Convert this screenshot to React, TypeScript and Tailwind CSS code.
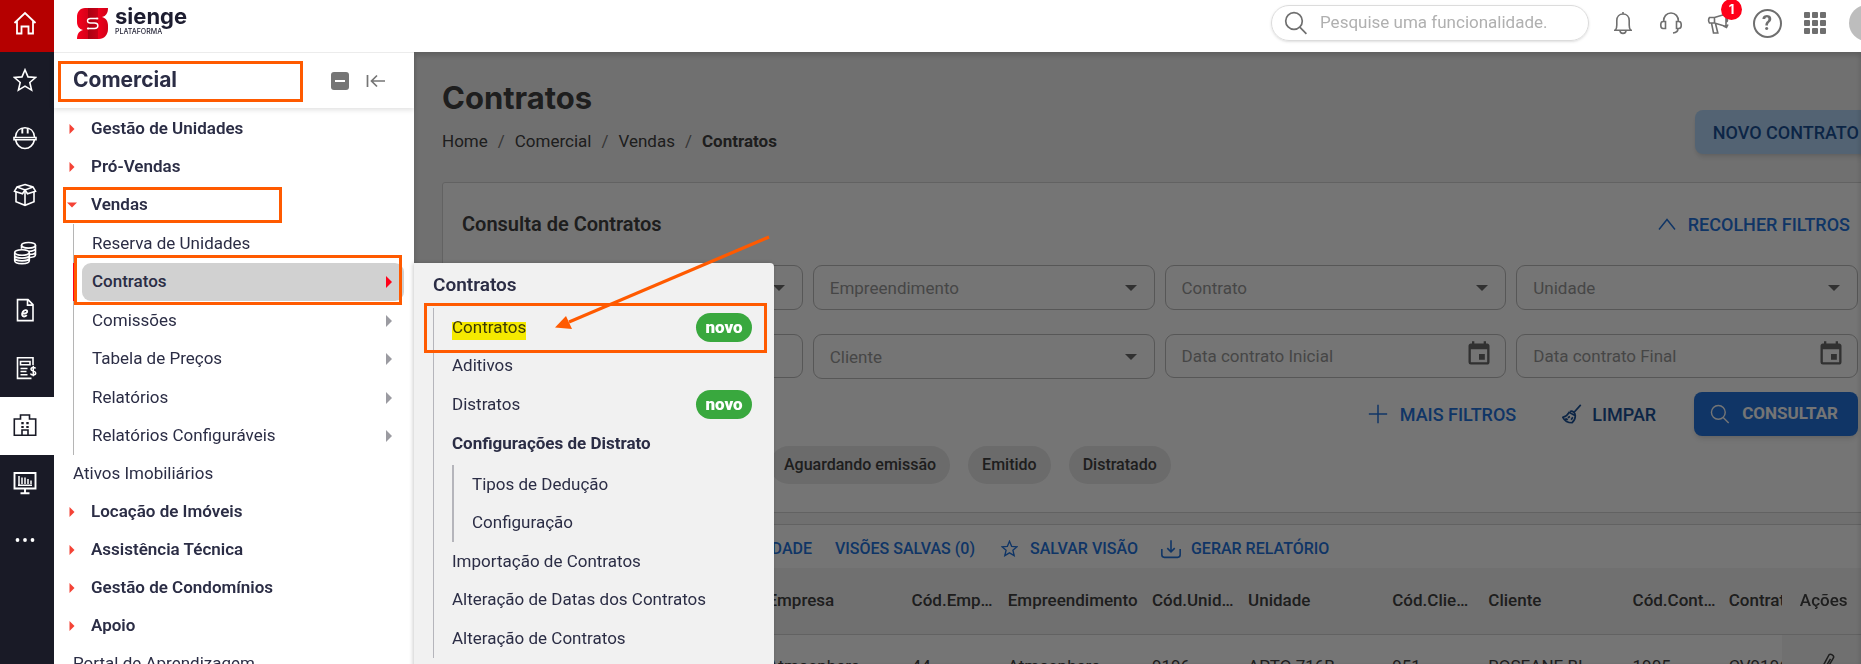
import { ReactNode } from "react";
import { MdEvent } from "react-icons/md";
import clsx from "clsx";

interface MenuEntry {
  label: string;
  open?: boolean;
  leaf?: boolean;
}

interface SubEntry {
  label: string;
  arrow?: boolean;
  active?: boolean;
}

const topMenu: MenuEntry[] = [
  { label: "Gestão de Unidades" },
  { label: "Pró-Vendas" },
  { label: "Vendas", open: true },
  { label: "Ativos Imobiliários", leaf: true },
  { label: "Locação de Imóveis" },
  { label: "Assistência Técnica" },
  { label: "Gestão de Condomínios" },
  { label: "Apoio" },
  { label: "Portal de Aprendizagem", leaf: true },
];

const vendasMenu: SubEntry[] = [
  { label: "Reserva de Unidades" },
  { label: "Contratos", arrow: true, active: true },
  { label: "Comissões", arrow: true },
  { label: "Tabela de Preços", arrow: true },
  { label: "Relatórios", arrow: true },
  { label: "Relatórios Configuráveis", arrow: true },
];

const columns = [
  { title: "Empresa", value: "Atmosphere", width: "w-[144px]" },
  { title: "Cód.Emp…", value: "44", width: "w-[96px]" },
  { title: "Empreendimento", value: "Atmosphere", width: "w-[144px]" },
  { title: "Cód.Unid…", value: "9196", width: "w-[96px]" },
  { title: "Unidade", value: "APTO 716B", width: "w-[144px]" },
  { title: "Cód.Clie…", value: "951", width: "w-[96px]" },
  { title: "Cliente", value: "ROSEANE BI…", width: "w-[144px]" },
  { title: "Cód.Cont…", value: "1905", width: "w-[96px]" },
  { title: "Contrato", value: "CV9196", width: "w-[144px]" },
];

function Icon({ children, size = "size-6", width = 1.6 }: { children: ReactNode; size?: string; width?: number }) {
  return (
    <svg viewBox="0 0 24 24" className={clsx(size, "shrink-0")} fill="none" stroke="currentColor" strokeWidth={width} aria-hidden="true">
      {children}
    </svg>
  );
}

const StarShape = () => <path d="M12 1.800l3 7.100 7.600.6-5.800 5 1.800 7.600-6.600-4-6.600 4 1.800-7.600-5.800-5 7.600-.6z" />;

const SearchShape = () => (
  <>
    <circle cx="10" cy="10" r="8.300" />
    <path d="M15.800 16.200l6.600 6.600" />
  </>
);

const railItems: { name: string; icon: ReactNode; active?: boolean }[] = [
  { name: "Favoritos", icon: <StarShape /> },
  {
    name: "Engenharia",
    icon: (
      <>
        <path d="M2.500 11C3 5 7 1.800 12 1.800S21 5 21.500 11M1 11.500h22v2.200H1zM2.600 14c1 5 4.800 8.500 9.400 8.500s8.400-3.500 9.400-8.500" />
        <path d="M9.300 2v5.500M14.700 2v5.500" strokeWidth="1.900" />
      </>
    ),
  },
  {
    name: "Suprimentos",
    icon: (
      <>
        <path d="M12 1.600l8 2.400 2.500 4.200-8 2.600L12 7 9.500 10.800 1.500 8.200 4 4z" />
        <path d="M4 4l8 3 8-3M12 7v15.300M3 9v9.800l9 3.500 9-3.500V9" />
      </>
    ),
  },
  {
    name: "Financeiro",
    icon: (
      <>
        <ellipse cx="15.500" cy="4.300" rx="7" ry="2.800" />
        <path d="M8.500 4.300v3.500M22.500 4.300v9.500c0 1.400-2.500 2.500-5.500 2.700M22.500 7.500c0 1.500-3 2.800-6.500 2.800M22.500 10.700c0 1.400-2.500 2.600-5.500 2.700" />
        <ellipse cx="9" cy="11.500" rx="7.300" ry="2.800" />
        <path d="M1.700 11.500v8.300c0 1.600 3.300 2.800 7.300 2.800s7.300-1.200 7.300-2.800v-8.300M1.700 14.400c0 1.500 3.300 2.700 7.300 2.700s7.300-1.200 7.300-2.700M1.700 17.200c0 1.500 3.300 2.700 7.300 2.700s7.300-1.200 7.300-2.700" />
      </>
    ),
  },
  {
    name: "Fiscal",
    icon: (
      <>
        <path d="M4.500 1.600h10.500l5 5v16H4.500zM14.500 1.800v5.300h5.300" />
        <path d="M9.200 15.500c3.200.2 5.200-.7 5-2.200-.2-1.800-3.300-1.500-4.400.6-1.200 2.300-.9 4.500 1.200 4.600 1.200 0 2-.5 2.800-1.300" strokeWidth="1.900" />
      </>
    ),
  },
  {
    name: "Contabilidade",
    icon: (
      <>
        <path d="M20 9V1.800H4.500v20.600h14M7.500 5.500h9.500v3.200H7.500zM7.500 12.500h7M7.500 15.500h6M7.500 18.800h7" />
        <path d="M22.500 12.500c-.5-1.300-4.500-1.600-4.500.8 0 2.300 4.700 1.300 4.700 3.700 0 2.600-4.600 2.400-5.200.6M20.300 9.800v10.400" strokeWidth="1.500" />
      </>
    ),
  },
  {
    name: "Comercial",
    active: true,
    icon: (
      <>
        <path d="M7.500 6V2h9v4h6.200v16.300H1.300V6zM9 22v-5h6v5" />
        <path d="M9.500 9v2.300M14.500 9v2.300M9.500 13v2M14.500 13v2" strokeWidth="2.400" />
      </>
    ),
  },
  {
    name: "Painéis",
    icon: (
      <>
        <path d="M1.500 2h21v15.500h-21zM12 17.500v4.300M7.500 22.300h9" strokeWidth="1.900" />
        <path d="M6 5v9.500M9 6.500v6.500M12 6.500v6.500M15 8v5M18 9.500v3.500M5 14.300h14" strokeWidth="1.500" />
      </>
    ),
  },
  {
    name: "Mais",
    icon: (
      <g fill="currentColor" stroke="none">
        <circle cx="4.500" cy="12" r="1.900" />
        <circle cx="12" cy="12" r="1.900" />
        <circle cx="19.500" cy="12" r="1.900" />
      </g>
    ),
  },
];

function Rail() {
  return (
    <nav className="flex w-[54px] shrink-0 flex-col bg-[#191a26] text-white">
      <button aria-label="Início" className="flex h-[52px] items-center justify-center bg-[#b50000] pr-1 pb-1.5">
        <Icon width={1.800}>
          <path d="M1.500 12L12 2l10.500 10M4 10v12.500h4.500v-7h7v7H20V10" />
        </Icon>
      </button>
      <ul>
        {railItems.map((item) => (
          <li key={item.name} className={clsx("h-[57px] odd:h-[58px]", item.active && "bg-white text-[#191a26]")}>
            <button aria-label={item.name} className="flex size-full items-center justify-center pr-1 pb-0.5">
              <Icon>{item.icon}</Icon>
            </button>
          </li>
        ))}
      </ul>
    </nav>
  );
}

function Logo() {
  return (
    <a href="#" className="flex items-center gap-[7px] text-[#1d1d30]">
      <svg viewBox="0 0 31 31" className="size-[31px]" aria-hidden="true">
        <defs>
          <linearGradient id="siengeRed" x1="0" x2="1" y1="0" y2="0">
            <stop offset="0" stopColor="#f5001d" />
            <stop offset=".34" stopColor="#d80018" />
            <stop offset=".35" stopColor="#a80012" />
            <stop offset=".68" stopColor="#c80016" />
            <stop offset=".69" stopColor="#ee001c" />
            <stop offset="1" stopColor="#d20018" />
          </linearGradient>
        </defs>
        <path d="M8 0h23c0 5-2 8-6 9 4 1 6 4 6 9v3c0 6-4 10-9 10H0c0-5 2-8 6-9-4-1-6-4-6-8V9c0-5 3-9 8-9z" fill="url(#siengeRed)" />
        <path d="M20 10.500h-6.500c-4 0-4 4.500 0 4.500h4c4.500 0 4.500 5.500 0 5.500H11" fill="none" stroke="#fff" strokeWidth="1.400" />
        <circle cx="20.300" cy="10.500" r="1.100" fill="#fff" />
        <circle cx="11" cy="20.500" r="1.100" fill="#fff" />
      </svg>
      <span className="flex flex-col pb-1 font-[Inter]">
        <span className="text-[22px]/[20px] font-bold">sienge</span>
        <span className="pt-0.5 text-[7px]/[8px] font-medium">PLATAFORMA</span>
      </span>
    </a>
  );
}

function TopBar() {
  return (
    <header className="relative z-30 h-[52px] shrink-0 overflow-hidden bg-white">
      <div className="-mr-6 flex h-[46px] items-center pl-[23px] text-[#6f6f6f]">
        <Logo />
        <label className="ml-auto flex h-9 w-[318px] items-center gap-3 rounded-full border border-[#dcdcdc] pr-4 pl-3 shadow-sm">
          <Icon width={1.700}>
            <SearchShape />
          </Icon>
          <input
            type="search"
            aria-label="Pesquisar"
            placeholder="Pesquise uma funcionalidade."
            className="min-w-0 flex-1 text-[17px] outline-none placeholder:text-[#b0b0b0]"
          />
        </label>
        <div className="ml-[10px] flex items-center">
          <button aria-label="Notificações" className="flex w-12 justify-center">
            <Icon>
              <path d="M3 19.300h18M4.500 19c1-1.200 1.300-2.500 1.300-5V9.500C5.800 5.500 8.500 3 12 3s6.200 2.500 6.200 6.500V14c0 2.500.3 3.800 1.300 5M12 3V1M9 19.500c0 3.800 6 3.800 6 0" />
            </Icon>
          </button>
          <button aria-label="Suporte" className="flex w-12 justify-center">
            <Icon>
              <path d="M4.500 10.500C4.500 5.500 7.500 2 12 2s7.500 3.500 7.500 8.500M6.500 10.500v7H4c-3 0-3-7 0-7zM17.500 10.500v7H20c3 0 3-7 0-7zM19 17.500c0 2.800-1.800 4.200-5 4.500" />
            </Icon>
          </button>
          <button aria-label="Novidades, 1 não lida" className="relative flex w-12 justify-center">
            <Icon>
              <path d="M2.500 6.500h5L19 3v12.500L7.500 12h-5c-1-1.500-1-4 0-5.500zM7.500 6.500V12M4.500 12l2 10h4.300L8.500 12.500M19 7.500c2 .5 2 3 0 3.500M16.500 15l3 1.500 1.500-3" />
            </Icon>
            <span className="absolute -top-3 left-[26px] flex size-[21px] items-center justify-center rounded-full bg-[#ff0019] font-[Inter] text-[13px] font-bold text-white">
              1
            </span>
          </button>
          <button aria-label="Ajuda" className="flex w-12 justify-center">
            <span className="flex size-[29px] items-center justify-center rounded-full border-2 border-[#6f6f6f] text-[20px] font-bold">?</span>
          </button>
          <button aria-label="Aplicativos" className="flex w-12 justify-center">
            <svg viewBox="0 0 22 22" className="size-[22px]" fill="currentColor" aria-hidden="true">
              {[0, 8, 16].map((y) => [0, 8, 16].map((x) => <rect key={`${x}-${y}`} x={x} y={y} width="6" height="6" rx="1" />))}
            </svg>
          </button>
          <span className="ml-[10px] size-9 rounded-full bg-[#bdbdbd]" />
        </div>
      </div>
    </header>
  );
}

function Arrow({ className }: { className?: string }) {
  return (
    <svg viewBox="0 0 6 12" className={clsx("h-3 w-1.5 shrink-0", className)} fill="currentColor" aria-hidden="true">
      <path d="M0 0l6 6-6 6z" />
    </svg>
  );
}

function Mark({ className }: { className: string }) {
  return <span className={clsx("pointer-events-none absolute z-10 border-3 border-[#ff5a00]", className)} />;
}

function SideMenu() {
  return (
    <aside className="relative z-20 w-[360px] shrink-0 bg-white text-[17px] text-[#2b2d45]">
      <div className="relative flex h-14 items-center border-t border-[#ececec] pr-7 pl-[19px] shadow-[0_2px_5px_rgba(0,0,0,0.12)]">
        <Mark className="top-2 left-1 h-[41px] w-[245px]" />
        <h2 className="pb-0.5 font-[Inter] text-[21px] font-bold">Comercial</h2>
        <button aria-label="Recolher grupos" className="ml-auto flex size-[18px] items-center justify-center rounded-[3px] bg-[#757575]">
          <span className="h-0.5 w-2.5 bg-white" />
        </button>
        <button aria-label="Fechar menu" className="ml-[17px] text-[#757575]">
          <svg viewBox="0 0 20 14" className="h-3.5 w-5" fill="none" stroke="currentColor" strokeWidth="1.700" aria-hidden="true">
            <path d="M1.500 1v12M19 7H6M11 1.500L5.500 7l5.500 5.500" />
          </svg>
        </button>
      </div>
      <ul className="pt-0.5">
        {topMenu.map((item) => (
          <li key={item.label} className="relative">
            {item.open && <Mark className="top-px left-[9px] h-9 w-[219px]" />}
            <a href="#" className={clsx("flex h-[38px] items-center", item.leaf ? "pl-[19px]" : "gap-3.5 pl-[13px] font-semibold")}>
              {!item.leaf && (
                <svg viewBox="0 0 10 10" className={clsx("size-2.5 shrink-0 text-[#f44336]", item.open && "rotate-90")} fill="currentColor" aria-hidden="true">
                  <path d="M2.500 0l5 5-5 5z" />
                </svg>
              )}
              {item.label}
            </a>
            {item.open && (
              <ul className="ml-[19px]">
                {vendasMenu.map((sub) => (
                  <li
                    key={sub.label}
                    className={clsx("relative h-[38px] border-l pl-2 odd:h-[39px]", sub.active ? "border-[#ff0019]" : "border-[#b5b5b5]")}
                  >
                    {sub.active && <Mark className="-top-2 left-0 h-[50px] w-[328px]" />}
                    <a
                      href="#"
                      className={clsx(
                        "mr-2.5 flex h-full items-center justify-between rounded-[9px] pr-3 pl-2.5",
                        sub.active && "bg-[#d1d1d1] font-medium"
                      )}
                    >
                      {sub.label}
                      {sub.arrow && <Arrow className={sub.active ? "text-[#ff0019]" : "text-[#9b9ba1]"} />}
                    </a>
                  </li>
                ))}
              </ul>
            )}
          </li>
        ))}
      </ul>
      <Flyout />
    </aside>
  );
}

function Badge() {
  return <span className="flex h-[29px] w-14 items-center justify-center rounded-full bg-[#39a83e] font-black text-white">novo</span>;
}

function Flyout() {
  const row = "flex h-[38px] items-center justify-between odd:h-[39px]";
  return (
    <div className="absolute top-[211px] left-full h-full w-[360px] rounded-tr bg-[#f1f1f1] pl-[19px] shadow-[-1px_0_4px_rgba(0,0,0,0.2)]">
      <h3 className="flex h-[45px] items-center text-[19px] font-semibold">Contratos</h3>
      <Mark className="top-10 left-[10px] h-[50px] w-[343px]" />
      <ul className="border-l border-[#b5b5bb] pr-[22px] pl-[18px]">
        <li className={row}>
          <a href="#" className="bg-linear-to-b from-transparent from-28% to-[#f5e900] to-28% text-[#3c3a08]">Contratos</a>
          <Badge />
        </li>
        <li className={row}>
          <a href="#">Aditivos</a>
        </li>
        <li className={row}>
          <a href="#">Distratos</a>
          <Badge />
        </li>
        <li>
          <span className="flex h-[41px] items-center pb-0.5 font-bold">Configurações de Distrato</span>
          <ul className="border-l-2 border-[#b5b5bb] pl-[18px]">
            <li className={row}>
              <a href="#">Tipos de Dedução</a>
            </li>
            <li className={row}>
              <a href="#">Configuração</a>
            </li>
          </ul>
        </li>
        <li className={row}>
          <a href="#">Importação de Contratos</a>
        </li>
        <li className={row}>
          <a href="#">Alteração de Datas dos Contratos</a>
        </li>
        <li className={row}>
          <a href="#">Alteração de Contratos</a>
        </li>
      </ul>
    </div>
  );
}

function SelectField({ label, hideLabel }: { label: string; hideLabel?: boolean }) {
  return (
    <div className="relative">
      <select aria-label={label} className="h-[45px] w-full appearance-none rounded-[9px] border border-[#bdbdbd] px-4 pt-0.5 text-[17px] text-[#9a9a9a]">
        <option>{hideLabel ? "" : label}</option>
      </select>
      <svg viewBox="0 0 12 6" className="pointer-events-none absolute top-5 right-[18px] h-1.5 w-3" fill="#6b6b6b" aria-hidden="true">
        <path d="M0 0h12L6 6z" />
      </svg>
    </div>
  );
}

function TextField({ label, date, hideLabel }: { label: string; date?: boolean; hideLabel?: boolean }) {
  return (
    <div className="flex h-11 items-center rounded-[9px] border border-[#bdbdbd] pr-3 pl-4">
      <input
        type="text"
        aria-label={label}
        placeholder={hideLabel ? "" : label}
        className="min-w-0 flex-1 pt-0.5 text-[17px] outline-none placeholder:text-[#9a9a9a]"
      />
      {date && (
        <button aria-label={`Abrir calendário: ${label}`}>
          <MdEvent className="mb-1 size-7 text-[#6b6b6b]" />
        </button>
      )}
    </div>
  );
}

function Filters() {
  return (
    <section className="rounded-[3px] border border-[#d6d6d6] bg-white px-[18px] pb-7">
      <div className="flex h-[82px] items-center justify-between">
        <h2 className="pl-px text-[20px] font-semibold">Consulta de Contratos</h2>
        <button className="flex items-center gap-3 pr-2 text-[18px] font-medium text-[#2475de]">
          <svg viewBox="0 0 18 12" className="h-3 w-[18px]" fill="none" stroke="currentColor" strokeWidth="1.500" aria-hidden="true">
            <path d="M1 11.500L9 1.500l8 10" />
          </svg>
          RECOLHER FILTROS
        </button>
      </div>
      <div className="grid grid-cols-4 gap-x-2.5 gap-y-6">
        <SelectField label="Empresa" hideLabel />
        <SelectField label="Empreendimento" />
        <SelectField label="Contrato" />
        <SelectField label="Unidade" />
        <TextField label="Número" hideLabel />
        <SelectField label="Cliente" />
        <TextField label="Data contrato Inicial" date />
        <TextField label="Data contrato Final" date />
      </div>
      <div className="mt-[13px] flex items-center justify-end text-[18px] font-medium">
        <button className="flex items-center gap-3 text-[#2475de]">
          <Icon size="size-5" width={1.800}>
            <path d="M12 1v22M1 12h22" />
          </Icon>
          MAIS FILTROS
        </button>
        <button className="ml-[46px] flex items-center gap-2.5 text-[#1b5298]">
          <Icon size="size-5" width={2}>
            <path d="M22.500 1L14 10.500M9.500 9c3-1.500 6.500 1.500 6.500 5M8.500 10c-2 4-4 5-7.500 6 2 4 6 6.500 11 6.500 3-2.500 4-5 4-8.500zM7 16.500l2.500-1.500M11 19l2-3M4 17.500l3 1.500" />
          </Icon>
          LIMPAR
        </button>
        <button className="ml-[38px] flex h-11 items-center gap-3 rounded-lg bg-[#2475de] pr-5 pl-4 text-[17px] font-bold text-white shadow-md">
          <Icon size="size-5" width={1.700}>
            <SearchShape />
          </Icon>
          CONSULTAR
        </button>
      </div>
      <ul className="mt-[10px] flex gap-[18px] pl-[309px] font-medium">
        {["Aguardando emissão", "Emitido", "Distratado"].map((status) => (
          <li key={status}>
            <button className="h-[38px] rounded-full bg-[#e9e9e9] px-3.5 text-[16px]">{status}</button>
          </li>
        ))}
      </ul>
    </section>
  );
}

function Results() {
  return (
    <section className="mt-[11px] rounded-t-[3px] border border-[#d6d6d6] bg-white">
      <div className="flex h-[43px] items-center pt-1 text-[16px] font-medium text-[#2475de]">
        <button className="w-[369px] text-right">DENSIDADE</button>
        <button className="ml-[23px]">VISÕES SALVAS (0)</button>
        <button className="ml-[26px] flex items-center gap-3">
          <Icon size="size-[17px]" width={1.900}>
            <StarShape />
          </Icon>
          SALVAR VISÃO
        </button>
        <button className="ml-[23px] flex items-center gap-2.5">
          <Icon size="size-5" width={1.900}>
            <path d="M12 1.500v14M7.500 11l4.500 4.500 4.500-4.500M1 12v7c0 2 .8 3 3 3h16c2.200 0 3-1 3-3v-7" />
          </Icon>
          GERAR RELATÓRIO
        </button>
      </div>
      <div className="overflow-hidden">
        <table className="w-[1524px] table-fixed text-left">
          <thead>
            <tr className="h-[66px] border-b border-[#d6d6d6] bg-[#f5f5f5]">
              <td className="w-[324px]" />
              {columns.map((column) => (
                <th key={column.title} className={clsx(column.width, "font-medium whitespace-nowrap")}>
                  {column.title}
                </th>
              ))}
              <th className="sticky right-0 w-[94px] bg-[#f5f5f5] pl-[18px] font-medium shadow-[-2px_0_4px_rgba(0,0,0,0.25)]">Ações</th>
            </tr>
          </thead>
          <tbody>
            <tr className="h-16">
              <td />
              {columns.map((column) => (
                <td key={column.title} className="whitespace-nowrap">
                  {column.value}
                </td>
              ))}
              <td className="sticky right-0 bg-[#f5f5f5] pl-9 shadow-[-2px_0_4px_rgba(0,0,0,0.25)]">
                <button aria-label="Anexos">
                  <Icon size="size-5" width={1.800}>
                    <path d="M13 2.500c2-2.500 7 .5 5.500 3.500L9.500 21c-2 2.500-6 .5-5-2.500zM15 7L8.500 18" />
                  </Icon>
                </button>
              </td>
            </tr>
          </tbody>
        </table>
      </div>
    </section>
  );
}

export default function App() {
  return (
    <div className="flex h-screen overflow-hidden font-[Roboto,sans-serif]">
      <Rail />
      <div className="flex min-w-0 flex-1 flex-col">
        <TopBar />
        <div className="relative flex min-h-0 flex-1">
          <SideMenu />
          <main className="relative min-w-0 flex-1 overflow-hidden bg-[#f5f5f5] text-[17px] text-[#424242]">
            <div className="-mr-4 pt-[23px] pl-7">
              <div className="flex items-end justify-between pb-7">
                <div>
                  <h1 className="font-[Inter] text-[31px]/[46px] font-bold">Contratos</h1>
                  <nav aria-label="Trilha" className="flex items-center gap-2.5 pt-[7px] leading-[26px]">
                    <a href="#">Home</a>
                    <span className="text-[#777]">/</span>
                    <a href="#">Comercial</a>
                    <span className="text-[#777]">/</span>
                    <a href="#">Vendas</a>
                    <span className="text-[#777]">/</span>
                    <span className="font-bold">Contratos</span>
                  </nav>
                </div>
                <button className="h-11 rounded-lg bg-[#b5d8fa] px-[18px] text-[18px] font-medium text-[#1b5298] shadow-md">NOVO CONTRATO</button>
              </div>
              <Filters />
              <Results />
            </div>
            <div className="pointer-events-none absolute inset-0 bg-black/54 shadow-[inset_0_3px_6px_rgba(0,0,0,0.2)]" />
          </main>
          <svg className="pointer-events-none absolute top-[180px] left-[495px] z-30 h-[100px] w-[224px]" viewBox="0 0 224 100" aria-hidden="true">
            <path d="M220 5L20 90" stroke="#ff5a00" strokeWidth="3" />
            <path d="M6 95.500L17 84l6 13z" fill="#ff5a00" />
          </svg>
        </div>
      </div>
    </div>
  );
}
